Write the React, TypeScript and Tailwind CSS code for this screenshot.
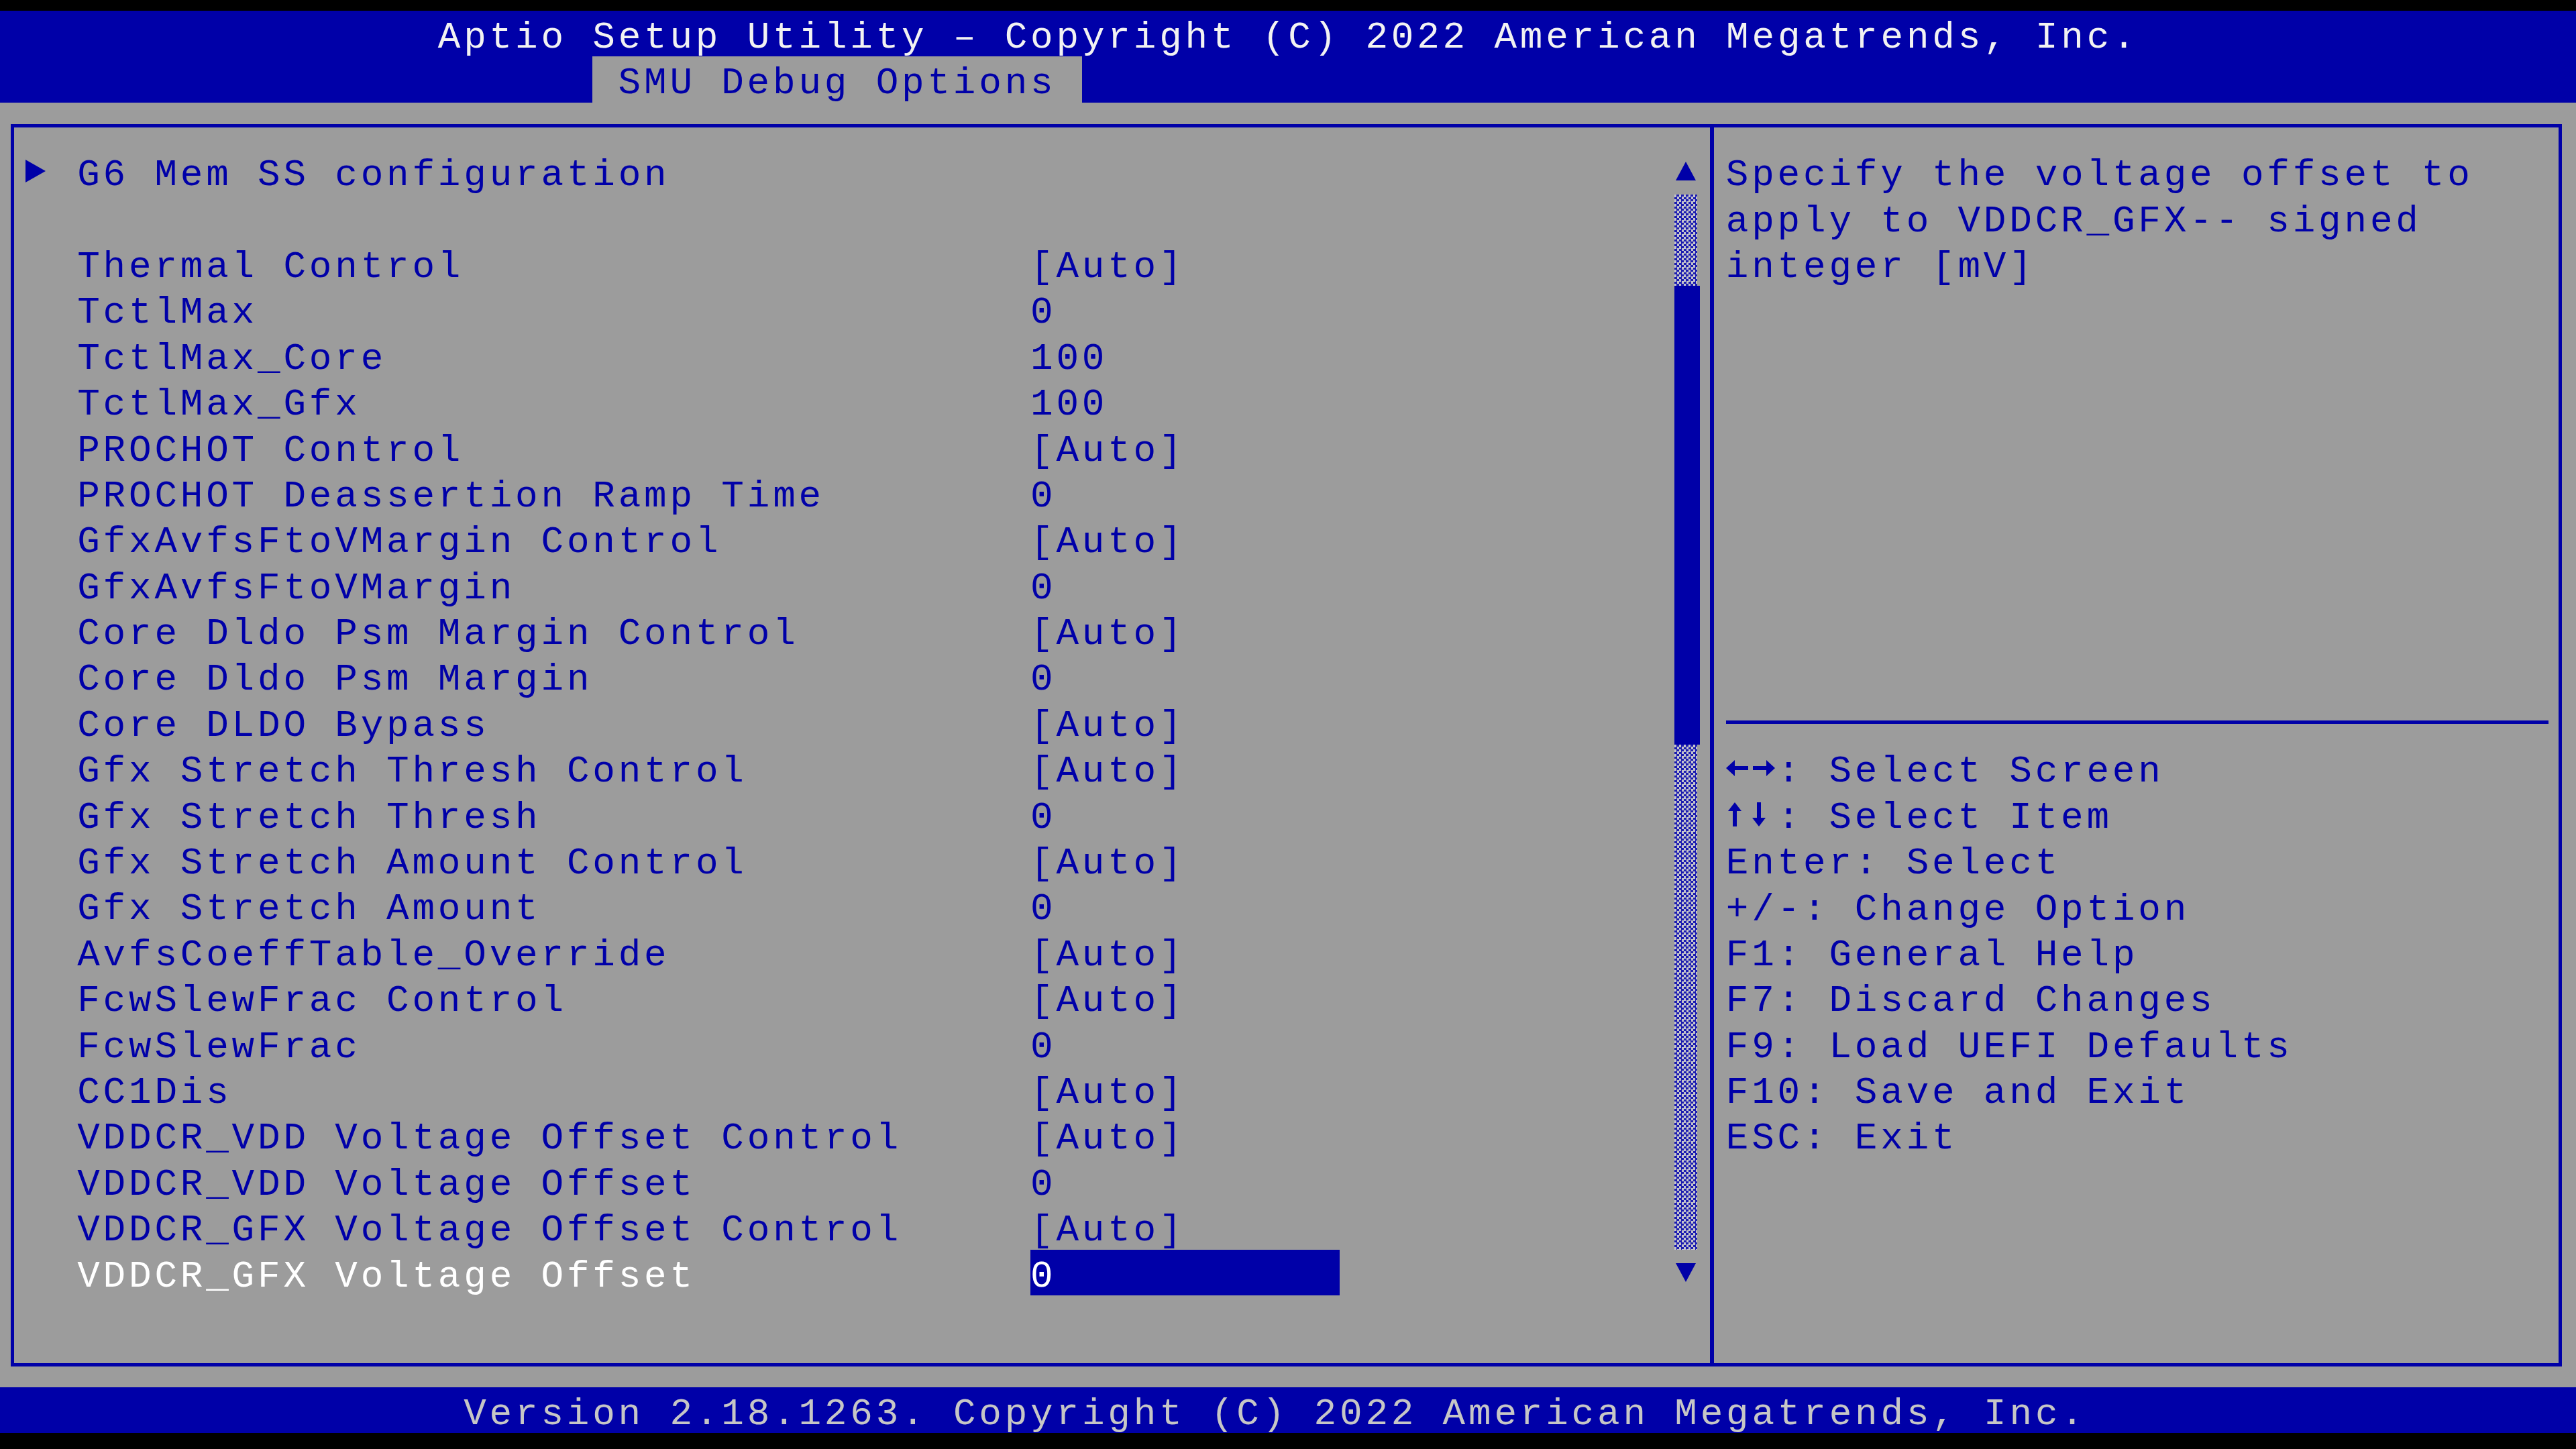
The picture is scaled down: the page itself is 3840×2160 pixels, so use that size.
const BLUE = "#0000a8";

type Item = { label: string; value?: string; submenu?: boolean; selected?: boolean } | null;

const items: Item[] = [
  { label: "G6 Mem SS configuration", submenu: true },
  null,
  { label: "Thermal Control", value: "[Auto]" },
  { label: "TctlMax", value: "0" },
  { label: "TctlMax_Core", value: "100" },
  { label: "TctlMax_Gfx", value: "100" },
  { label: "PROCHOT Control", value: "[Auto]" },
  { label: "PROCHOT Deassertion Ramp Time", value: "0" },
  { label: "GfxAvfsFtoVMargin Control", value: "[Auto]" },
  { label: "GfxAvfsFtoVMargin", value: "0" },
  { label: "Core Dldo Psm Margin Control", value: "[Auto]" },
  { label: "Core Dldo Psm Margin", value: "0" },
  { label: "Core DLDO Bypass", value: "[Auto]" },
  { label: "Gfx Stretch Thresh Control", value: "[Auto]" },
  { label: "Gfx Stretch Thresh", value: "0" },
  { label: "Gfx Stretch Amount Control", value: "[Auto]" },
  { label: "Gfx Stretch Amount", value: "0" },
  { label: "AvfsCoeffTable_Override", value: "[Auto]" },
  { label: "FcwSlewFrac Control", value: "[Auto]" },
  { label: "FcwSlewFrac", value: "0" },
  { label: "CC1Dis", value: "[Auto]" },
  { label: "VDDCR_VDD Voltage Offset Control", value: "[Auto]" },
  { label: "VDDCR_VDD Voltage Offset", value: "0" },
  { label: "VDDCR_GFX Voltage Offset Control", value: "[Auto]" },
  { label: "VDDCR_GFX Voltage Offset", value: "0", selected: true },
];

const helpLines = [
  "Specify the voltage offset to",
  "apply to VDDCR_GFX-- signed",
  "integer [mV]",
];

const keyLines = [
  "Enter: Select",
  "+/-: Change Option",
  "F1: General Help",
  "F7: Discard Changes",
  "F9: Load UEFI Defaults",
  "F10: Save and Exit",
  "ESC: Exit",
];

// one text cell of the 100x31 character grid
const row = "h-[68.4px] leading-[80px] whitespace-pre";

function LeftRightArrows() {
  return (
    <svg width="76.8" height="34" viewBox="0 0 76.8 34">
      <polygon points="0,17 13,5 13,29" fill={BLUE} />
      <rect x="11" y="14" width="22" height="6" fill={BLUE} />
      <rect x="40" y="14" width="22" height="6" fill={BLUE} />
      <polygon points="73,17 60,5 60,29" fill={BLUE} />
    </svg>
  );
}

function UpDownArrows() {
  return (
    <svg width="76.8" height="36" viewBox="0 0 76.8 36">
      <polygon points="13,0 3,13 23,13" fill={BLUE} />
      <rect x="10" y="11" width="6" height="25" fill={BLUE} />
      <rect x="46" y="0" width="6" height="25" fill={BLUE} />
      <polygon points="49,36 39,23 59,23" fill={BLUE} />
    </svg>
  );
}

function SettingRow({ item }: { item: Item }) {
  if (!item) return <div className="h-[68.4px]" />;
  return (
    <div className="flex h-[68.4px]">
      <div className="flex w-[76.8px] items-center">
        {item.submenu && (
          <svg width="30" height="34" viewBox="0 0 30 34">
            <polygon points="0,0 30,17 0,34" fill={BLUE} />
          </svg>
        )}
      </div>
      <div className={`${row} w-[1420.8px] ${item.selected ? "text-white" : ""}`}>{item.label}</div>
      {item.value !== undefined && (
        <div className={`${row} w-[460.8px] ${item.selected ? "bg-[#0000a8] text-white" : ""}`}>
          {item.value}
        </div>
      )}
    </div>
  );
}

function ScrollBar() {
  const track =
    "w-[34px] bg-[repeating-conic-gradient(#1c1cb0_0_25%,#c4c4cc_0_50%)] bg-[length:7px_7px]";
  return (
    <div className="flex w-[38.4px] flex-col">
      <div className="flex h-[68.4px] items-center">
        <svg width="34" height="28" viewBox="0 0 34 28">
          <polygon points="17,0 32,28 2,28" fill={BLUE} />
        </svg>
      </div>
      <div className={`${track} h-[136.8px]`} />
      <div className="h-[684px] w-[38px] bg-[#0000a8]" />
      <div className={`${track} h-[752.4px]`} />
      <div className="flex h-[68.4px] items-center">
        <svg width="34" height="28" viewBox="0 0 34 28">
          <polygon points="2,0 32,0 17,28" fill={BLUE} />
        </svg>
      </div>
    </div>
  );
}

export default function App() {
  return (
    <div className="h-[2160px] w-[3840px] overflow-hidden bg-black pt-[16px] font-['Liberation_Mono',monospace] text-[56px] tracking-[4.8px] text-[#0000a8]">
      {/* title bar + active tab */}
      <div className="h-[136.8px] bg-[#0000a8]">
        <div className={`${row} pl-[652.8px] text-[#f2f2f2]`}>
          Aptio Setup Utility – Copyright (C) 2022 American Megatrends, Inc.
        </div>
        <div className={`${row} ml-[883.2px] w-[729.6px] bg-[#9c9c9c] pl-[38.4px]`}>SMU Debug Options</div>
      </div>

      <div className="h-[1915.2px] bg-[#9c9c9c] pt-[32.2px] pl-[16px]">
        <div className="flex h-[1852px] w-[3803px] border-[5px] border-[#0000a8]">
          <div className="flex w-[2528px] pt-[31.2px] pl-[17.4px] pr-[14.6px]">
            <div className="flex flex-1 flex-col">
              {items.map((item, i) => (
                <SettingRow key={i} item={item} />
              ))}
            </div>
            <ScrollBar />
          </div>
          <div className="w-[6px] bg-[#0000a8]" />
          <div className="flex flex-1 flex-col pt-[31.2px] pl-[17.8px]">
            {helpLines.map((line) => (
              <div key={line} className={row}>
                {line}
              </div>
            ))}
            <div className="h-[615.6px]" />
            <div className="flex h-[68.4px] items-center">
              <div className="h-[5px] w-[1226px] bg-[#0000a8]" />
            </div>
            <div className="flex h-[68.4px]">
              <div className="pt-[18px]">
                <LeftRightArrows />
              </div>
              <span className={row}>: Select Screen</span>
            </div>
            <div className="flex h-[68.4px]">
              <div className="pt-[17px]">
                <UpDownArrows />
              </div>
              <span className={row}>: Select Item</span>
            </div>
            {keyLines.map((line) => (
              <div key={line} className={row}>
                {line}
              </div>
            ))}
          </div>
        </div>
      </div>

      <div className={`${row} bg-[#0000a8] pl-[691.2px] text-[#c6c6c6]`}>
        Version 2.18.1263. Copyright (C) 2022 American Megatrends, Inc.
      </div>
    </div>
  );
}
